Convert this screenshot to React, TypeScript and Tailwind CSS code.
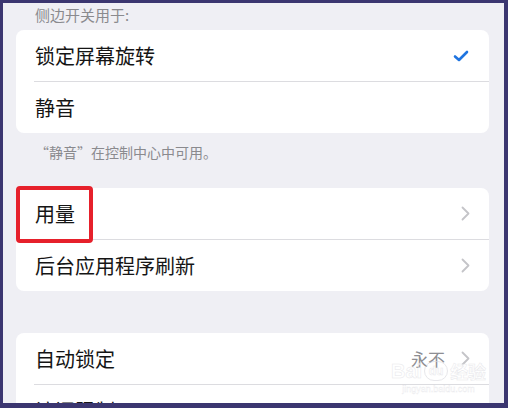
import React from 'react'

const font = { fontFamily: '"Noto Sans CJK SC", "Noto Sans", sans-serif' }
const latin = { fontFamily: '"Liberation Sans", sans-serif' }

const Check = () => (
  <svg width="16" height="12" viewBox="0 0 16 12" fill="none">
    <path d="M2 6.5 L6 10 L14 2" stroke="#1f74e0" strokeWidth="2.6" strokeLinecap="round" strokeLinejoin="round" />
  </svg>
)

const Chevron = () => (
  <svg width="9" height="15" viewBox="0 0 9 15" fill="none">
    <path d="M1.5 1.5 L7.5 7.5 L1.5 13.5" stroke="#c4c4c8" strokeWidth="1.8" strokeLinecap="round" strokeLinejoin="round" />
  </svg>
)

interface RowProps {
  label: string
  value?: string
  right?: React.ReactNode
}

const Row: React.FC<RowProps> = ({ label, value, right }) => (
  <div className="flex items-center h-[51px] pl-[19px] pr-[19px]">
    <span className="flex-1 text-[20px] text-[#151515] leading-none">{label}</span>
    {value && <span className="text-[17px] text-[#8e8e93] mr-[16px] leading-none">{value}</span>}
    {right}
  </div>
)

const Sep = () => <div className="ml-[18px] h-px bg-[#dcdce0]" />

export default function App() {
  return (
    <div className="w-[508px] h-[408px] bg-[#3b3670] pt-[3px] pl-[3px] pr-[4px] pb-[5px]" style={font}>
      <div className="relative h-full w-full bg-[#efeff4] overflow-hidden">
        {/* header */}
        <div className="h-[27px] flex items-center pb-[3px] pl-[32px] text-[15px] text-[#8a8a8e]">
          侧边开关用于:
        </div>

        <div className="ml-[13px] mr-[15px] bg-white rounded-[8px] overflow-hidden">
          <Row label="锁定屏幕旋转" right={<div className="mr-[1px]"><Check /></div>} />
          <Sep />
          <Row label="静音" />
        </div>

        <div className="h-[55px] pt-[12px] pl-[32px] text-[14px] text-[#8a8a8e] leading-none">
          “静音”在控制中心中可用。
        </div>

        <div className="relative ml-[13px] mr-[15px] bg-white rounded-[8px]">
          <Row label="用量" right={<Chevron />} />
          <Sep />
          <Row label="后台应用程序刷新" right={<Chevron />} />
          {/* red highlight */}
          <div className="absolute left-0 top-[-2px] w-[77px] h-[57px] border-[4px] border-[#e6202b] rounded-[4px]" />
        </div>

        <div className="h-[42px]" />

        <div className="ml-[13px] mr-[15px] bg-white rounded-[8px]">
          <Row label="自动锁定" value="永不" right={<Chevron />} />
          <Sep />
          <Row label="访问限制" value="关闭" right={<Chevron />} />
        </div>

        {/* watermark */}
        <div className="absolute left-[388px] top-[358px] flex flex-col items-center opacity-60 pointer-events-none">
          <div className="flex items-center text-[20px] leading-none text-white font-bold" style={{ ...latin, WebkitTextStroke: '0.5px #d8d8de' }}>
            Bai<span className="mx-[2px] inline-flex items-center justify-center w-[24px] h-[20px] rounded-full border border-[#d8d8de] text-[12px]">du</span>
            <span className="text-[18px]" style={font}>经验</span>
          </div>
          <div className="text-[9px] leading-none mt-[4px] text-white" style={{ ...latin, WebkitTextStroke: '0.3px #d8d8de' }}>
            jingyan.baidu.com
          </div>
        </div>
      </div>
    </div>
  )
}
